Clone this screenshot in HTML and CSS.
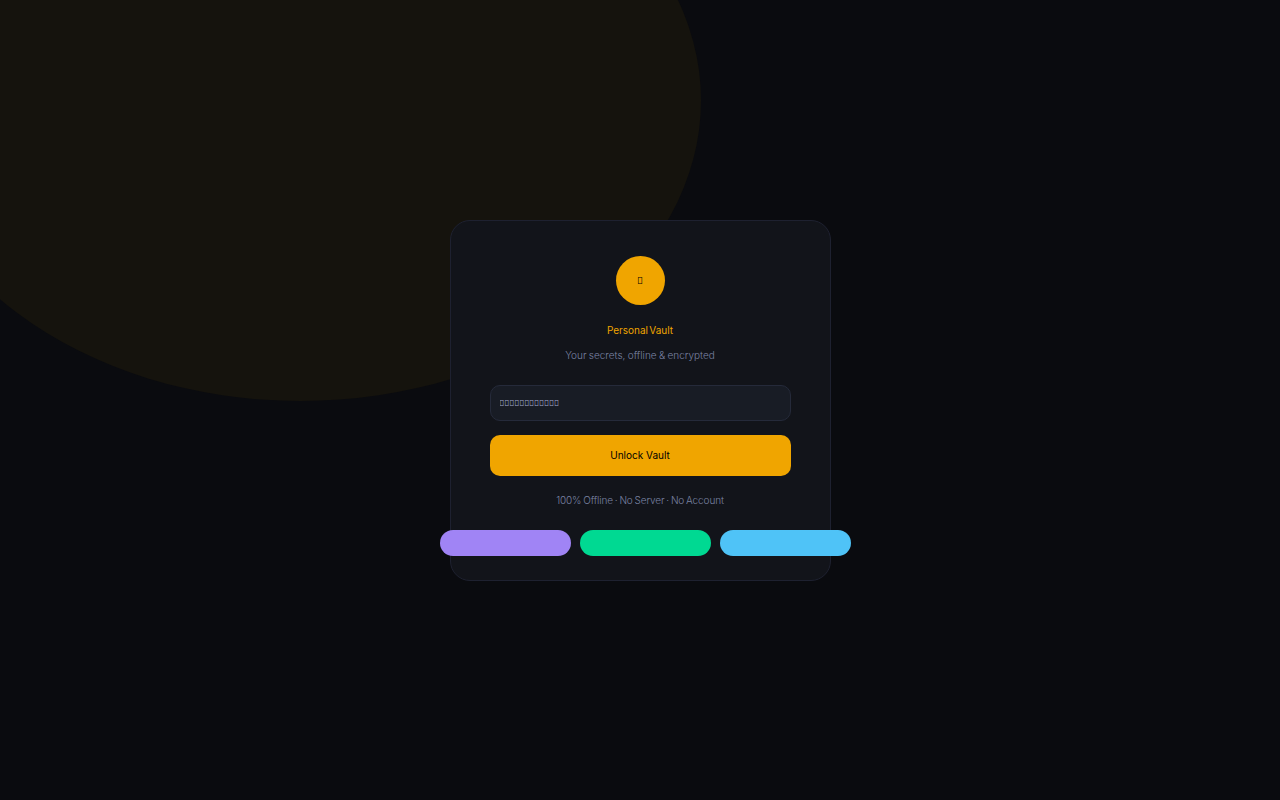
FILE: index.html
```html
<!DOCTYPE html>
<html lang="en">
<head>
    <meta charset="UTF-8">
    <meta name="viewport" content="width=device-width, initial-scale=1.0">
    <title>Personal Vault</title>
    <link rel="stylesheet" href="styles.css">
</head>
<body>
    <div class="glow"></div>
    <div class="card">
        <div class="logo">&#xE000;</div>
        <h1 class="title">Personal Vault</h1>
        <p class="subtitle">Your secrets, offline &amp; encrypted</p>
        <input type="password" class="pin-input" placeholder="&#xE000;&#xE000;&#xE000;&#xE000;&#xE000;&#xE000;&#xE000;&#xE000;&#xE000;&#xE000;&#xE000;&#xE000;">
        <button class="unlock-button">Unlock Vault</button>
        <p class="note">100% Offline · No Server · No Account</p>
        <div class="pills">
            <div class="pill pill-purple"></div>
            <div class="pill pill-green"></div>
            <div class="pill pill-blue"></div>
        </div>
    </div>
</body>
</html>
```

FILE: styles.css
```css
* {
    box-sizing: border-box;
}
body {
    margin: 0;
    height: 800px;
    overflow: hidden;
    position: relative;
    display: flex;
    align-items: center;
    justify-content: center;
    background-color: #0a0b0f;
    font-family: Inter, sans-serif;
    font-weight: 300;
}
.glow {
    position: absolute;
    left: -100px;
    top: -200px;
    width: 801px;
    height: 601px;
    border-radius: 50%;
    background-color: #15130d;
}
.card {
    position: relative;
    width: 381px;
    height: 361px;
    padding: 35px 39px 0;
    display: flex;
    flex-direction: column;
    background-color: #12141a;
    border: 1px solid #1e2130;
    border-radius: 20px;
}
.logo {
    width: 49px;
    height: 49px;
    margin: 0 auto;
    display: flex;
    align-items: center;
    justify-content: center;
    border-radius: 50%;
    background-color: #f0a500;
    font-family: "Noto Sans", sans-serif;
    font-size: 10px;
    font-weight: 700;
    color: #000;
}
.title {
    margin: 19px 0 0;
    font-size: 10px;
    font-weight: 400;
    line-height: 13px;
    word-spacing: -1.5px;
    text-align: center;
    color: #f0a500;
}
.subtitle {
    margin: 12px 0 0;
    font-size: 10px;
    line-height: 13px;
    word-spacing: -0.5px;
    text-align: center;
    color: #7a83a3;
}
.pin-input {
    width: 301px;
    height: 36px;
    margin-top: 23px;
    padding: 0 9px;
    background-color: #181c25;
    border: 1px solid #252a3a;
    border-radius: 10px;
    font-family: "Noto Sans", sans-serif;
    font-size: 8.3px;
}
.pin-input::placeholder {
    color: #a3add2;
}
.unlock-button {
    width: 301px;
    height: 41px;
    margin-top: 14px;
    background-color: #f0a500;
    border: none;
    border-radius: 10px;
    font-family: Inter, sans-serif;
    font-size: 10px;
    font-weight: 400;
    color: #000;
}
.note {
    margin: 18px 0 0;
    font-size: 10px;
    line-height: 13px;
    letter-spacing: -0.1px;
    word-spacing: -0.9px;
    text-align: center;
    color: #7a83a3;
}
.pills {
    display: flex;
    gap: 9px;
    margin: 23px 0 0 -50px;
}
.pill {
    flex: none;
    width: 131px;
    height: 26px;
    border-radius: 13px;
}
.pill-purple {
    background-color: #a084f5;
}
.pill-green {
    background-color: #00d992;
}
.pill-blue {
    background-color: #4fc3f7;
}
```
